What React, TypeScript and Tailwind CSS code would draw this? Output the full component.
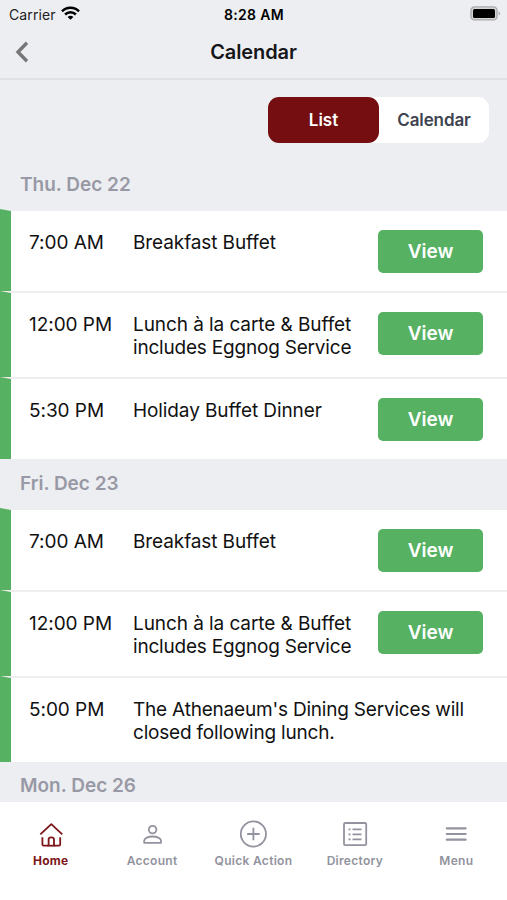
import React from 'react';

interface TitleLine {
  text: string;
  tracking: string;
}

interface CalendarEvent {
  time: string;
  title: TitleLine[];
  viewable: boolean;
  height: string;
}

interface CalendarDay {
  label: string;
  heading: string;
  events: CalendarEvent[];
}

const breakfast: CalendarEvent = {
  time: '7:00 AM',
  title: [{ text: 'Breakfast Buffet', tracking: 'tracking-[-0.1px]' }],
  viewable: true,
  height: 'h-[82px]',
};

const lunch: CalendarEvent = {
  time: '12:00 PM',
  title: [
    { text: 'Lunch à la carte & Buffet', tracking: 'tracking-[-0.08px]' },
    { text: 'includes Eggnog Service', tracking: 'tracking-[-0.2px]' },
  ],
  viewable: true,
  height: 'h-[86px]',
};

const days: CalendarDay[] = [
  {
    label: 'Thu. Dec 22',
    heading: 'h-[49px] pt-[2px]',
    events: [
      breakfast,
      lunch,
      {
        time: '5:30 PM',
        title: [{ text: 'Holiday Buffet Dinner', tracking: 'tracking-[-0.1px]' }],
        viewable: true,
        height: 'h-[82px]',
      },
    ],
  },
  {
    label: 'Fri. Dec 23',
    heading: 'h-[49px] pt-[1px]',
    events: [
      breakfast,
      lunch,
      {
        time: '5:00 PM',
        title: [
          { text: "The Athenaeum's Dining Services will", tracking: 'tracking-[-0.2px]' },
          { text: 'closed following lunch.', tracking: 'tracking-[-0.2px]' },
        ],
        viewable: false,
        height: 'h-[86px]',
      },
    ],
  },
  { label: 'Mon. Dec 26', heading: 'h-[49px]', events: [] },
];

const StatusBar = () => (
  <div className="flex h-7 items-center pl-[9px] pr-[8px] text-[14px] text-[#222]">
    <div className="flex flex-1 items-center gap-[6px]">
      <span className="tracking-[0.1px]">Carrier</span>
      <svg className="-ml-[1px] -mt-[2px]" width="19" height="14" viewBox="0 0 19 14" fill="none" stroke="#000" strokeWidth="2.5">
        <path d="M1 5.3C5.6.7 13.4.7 18 5.3" />
        <path d="M4.1 8.5c3-2.9 7.8-2.9 10.8 0" />
        <path d="M6.6 10.9c1.7-1.5 4.1-1.5 5.8 0l-2.9 2.9z" fill="#000" stroke="none" />
      </svg>
    </div>
    <span className="font-semibold tracking-[0.35px] text-black">8:28 AM</span>
    <div className="flex flex-1 justify-end">
      <svg className="-mr-[2px] -mt-[2px]" width="31" height="15" viewBox="0 0 31 15">
        <rect x="1" y=".9" width="26" height="13" rx="3.5" fill="#d5d5d7" stroke="#a9a9ab" strokeWidth="1.4" />
        <rect x="3" y="3" width="22" height="9" rx="1.5" fill="#000" />
        <path d="M28.6 5.3c2 .8 2 3.5 0 4.3z" fill="#a9a9ab" />
      </svg>
    </div>
  </div>
);

const TitleBar = () => (
  <header className="grid h-[52px] grid-cols-3 items-center border-b-2 border-[#e0e1e5] px-[15px] pb-[2px]">
    <svg width="14" height="22" viewBox="0 0 14 22" fill="none" stroke="#777" strokeWidth="3.4">
      <path d="M12 1.8 3 11l9 9.2" />
    </svg>
    <h1 className="text-center text-[20px] font-semibold tracking-[-0.1px] text-[#161618]">Calendar</h1>
  </header>
);

const ViewToggle = () => (
  <div className="flex h-[80px] justify-end pr-[18px] pt-[17px]">
    <div className="flex h-[46px] w-[221px] rounded-[11px] bg-white text-[17px] font-semibold">
      <button className="w-[111px] rounded-[11px] bg-[#750e11] pt-[2px] text-white">List</button>
      <button className="flex-1 pt-[2px] tracking-[-0.1px] text-[#3e4350]">Calendar</button>
    </div>
  </div>
);

const EventRow = ({ event }: { event: CalendarEvent }) => (
  <div
    className={`flex items-start border-l-[11px] border-t-2 border-l-[#56b163] border-t-[#eeeef0] bg-white pl-[18px] pr-6 pt-[19px] ${event.height}`}
  >
    <span className="w-[104px] shrink-0 pt-[1px] text-[19px] leading-[23px] tracking-[-0.05px] text-[#111]">
      {event.time}
    </span>
    <div className="flex-1 whitespace-nowrap pt-[1px] text-[19px] leading-[23px] text-[#111]">
      {event.title.map((line) => (
        <div key={line.text} className={line.tracking}>
          {line.text}
        </div>
      ))}
    </div>
    {event.viewable && (
      <button className="h-[43px] w-[105px] rounded-[5px] bg-[#56b163] pt-[2px] text-[19px] font-semibold text-white">
        View
      </button>
    )}
  </div>
);

const tabs = [
  {
    label: 'Home',
    icon: (
      <>
        <path d="m3.3 14.3 11-10.2 11 10.2" />
        <path d="M5.4 17.2v7.3c0 .8.5 1.2 1.2 1.2h4.1c.6 0 .9-.4.9-.9v-5.2c0-1.5 1-2.3 2.7-2.3s2.7.8 2.7 2.3v5.2c0 .5.3.9.9.9H22c.7 0 1.2-.4 1.2-1.2v-7.3" />
        <path d="M10.5 25.7h7.6" />
      </>
    ),
  },
  {
    label: 'Account',
    icon: (
      <>
        <circle cx="14.6" cy="9.6" r="3.8" />
        <path d="M6.2 22.8v-2.1c0-2.6 4.2-4.2 8.4-4.2s8.4 1.6 8.4 4.2v2.1z" />
      </>
    ),
  },
  {
    label: 'Quick Action',
    icon: (
      <>
        <circle cx="14.4" cy="14" r="12.6" />
        <path d="M14.4 7.8v12.4M8.2 14h12.4" />
      </>
    ),
  },
  {
    label: 'Directory',
    icon: (
      <>
        <rect x="3" y="3" width="22.2" height="22.2" rx="1.2" />
        <path d="M11.5 9.3h9M11.5 14.3h9M11.5 19.3h9M7.5 9.3h2M7.5 14.3h2M7.5 19.3h2" />
      </>
    ),
  },
  {
    label: 'Menu',
    icon: <path d="M4.8 8.3h18.8M4.8 14h18.8M4.8 19.7h18.8" strokeWidth="2.2" strokeLinecap="round" />,
  },
];

const TabBar = () => (
  <nav className="grid h-[98px] shrink-0 grid-cols-5 bg-white pt-[18px]">
    {tabs.map((tab) => (
      <div
        key={tab.label}
        className={`flex flex-col items-center ${tab.label === 'Home' ? 'font-bold text-[#7d1519]' : 'font-semibold text-[#92939e]'}`}
      >
        <svg width="28" height="28" viewBox="0 0 28 28" fill="none" stroke="currentColor" strokeWidth="1.8" strokeLinejoin="round">
          {tab.icon}
        </svg>
        <span className="mt-[5px] whitespace-nowrap text-[12px] leading-4 tracking-[0.3px]">{tab.label}</span>
      </div>
    ))}
  </nav>
);

export default function App() {
  return (
    <div className="flex h-[900px] w-[507px] flex-col overflow-hidden bg-[#edeef2] font-['Inter',sans-serif]">
      <StatusBar />
      <TitleBar />
      <main className="min-h-0 flex-1 overflow-hidden">
        <ViewToggle />
        {days.map((day) => (
          <section key={day.label}>
            <h2 className={`flex items-center pl-5 text-[19px] font-semibold text-[#9899a5] ${day.heading}`}>
              {day.label}
            </h2>
            {day.events.map((event) => (
              <EventRow key={event.time} event={event} />
            ))}
          </section>
        ))}
      </main>
      <TabBar />
    </div>
  );
}
